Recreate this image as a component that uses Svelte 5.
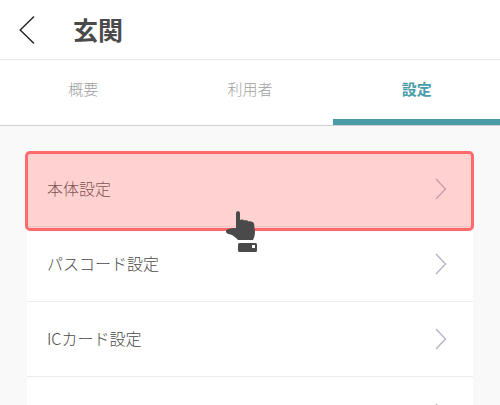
<script>
  const tabs = [
    { label: '概要' },
    { label: '利用者' },
    { label: '設定', active: true }
  ];
  const rows = ['本体設定', 'パスコード設定', 'ICカード設定', ''];
</script>

<div class="page">
  <header class="header">
    <svg class="back" width="18" height="30" viewBox="0 0 18 30">
      <path d="M16 1.5 L2.2 15 L16 28.5" fill="none" stroke="#222" stroke-width="1.4" />
    </svg>
    <h1 class="title">玄関</h1>
  </header>

  <nav class="tabs">
    {#each tabs as tab}
      <div class="tab" class:active={tab.active}>{tab.label}</div>
    {/each}
  </nav>

  <main class="content">
    <ul class="list">
      {#each rows as row, i}
        <li class="row">
          <span class="label">{row}</span>
          <svg class="chevron" width="12" height="22" viewBox="0 0 12 22">
            <path d="M1 1 L10.5 11 L1 21" fill="none" stroke="#b4b4c4" stroke-width="1.4" />
          </svg>
          {#if i === 0}
            <div class="highlight"></div>
            <svg class="pointer" width="34" height="43" viewBox="0 0 34 43">
              <path d="M11 3 C11 0.5 15 0.5 15 3 V10 C16.5 9 18.5 9.5 19 10.5 C20.5 10 23 10.5 23.5 11.5 C25 11 28 11.5 29 13.5 L30 22 C30 25 29 28 28 30 H13 C11 28 8 25 5.5 24.5 C2.5 24 0.5 23 1 21 C1.5 19 5 18 11 18 Z" fill="#4a4a4a" />
              <rect x="13" y="33" width="19" height="9" rx="1.5" fill="#4a4a4a" />
              <rect x="27" y="35" width="3" height="3" fill="#fff" />
            </svg>
          {/if}
        </li>
      {/each}
    </ul>
  </main>
</div>

<style>
  :global(body) {
    margin: 0;
    background: #f9f9f9;
  }

  .page {
    width: 500px;
    height: 405px;
    overflow: hidden;
    font-family: "Noto Sans CJK JP", "Noto Sans", sans-serif;
  }

  .header {
    height: 59px;
    display: flex;
    align-items: center;
    gap: 37px;
    padding-left: 18px;
    background: #fff;
    border-bottom: 1px solid #e8e8e8;
  }

  .back {
    flex: none;
  }

  .title {
    margin: 0 0 2px;
    font-size: 25px;
    font-weight: 700;
    color: #4a4a4a;
  }

  .tabs {
    height: 65px;
    display: flex;
    background: #fff;
    border-bottom: 1px solid #cfcfcf;
  }

  .tab {
    flex: 1;
    display: flex;
    justify-content: center;
    padding-top: 18px;
    box-sizing: border-box;
    font-size: 15px;
    font-weight: 300;
    line-height: 22px;
    color: #a0a0a0;
  }

  .tab.active {
    color: #4a9ca8;
    font-weight: 700;
    border-bottom: 6px solid #4a9ca8;
  }

  .content {
    padding: 26px 27px 0;
  }

  .list {
    list-style: none;
    margin: 0;
    padding: 0;
    background: #fff;
  }

  .row {
    position: relative;
    height: 74px;
    display: flex;
    align-items: center;
    justify-content: space-between;
    padding: 0 26px 0 20px;
    border-bottom: 1px solid #ebebeb;
    font-size: 16px;
    font-weight: 300;
    color: #4a4a4a;
  }

  .label {
    margin-bottom: 2px;
  }

  .highlight {
    position: absolute;
    inset: -1px -1px -5px -2px;
    border: 3px solid #ff6b6b;
    border-radius: 5px;
    background: rgba(255, 107, 107, 0.3);
  }

  .pointer {
    position: absolute;
    left: 198px;
    top: 58px;
  }
</style>
